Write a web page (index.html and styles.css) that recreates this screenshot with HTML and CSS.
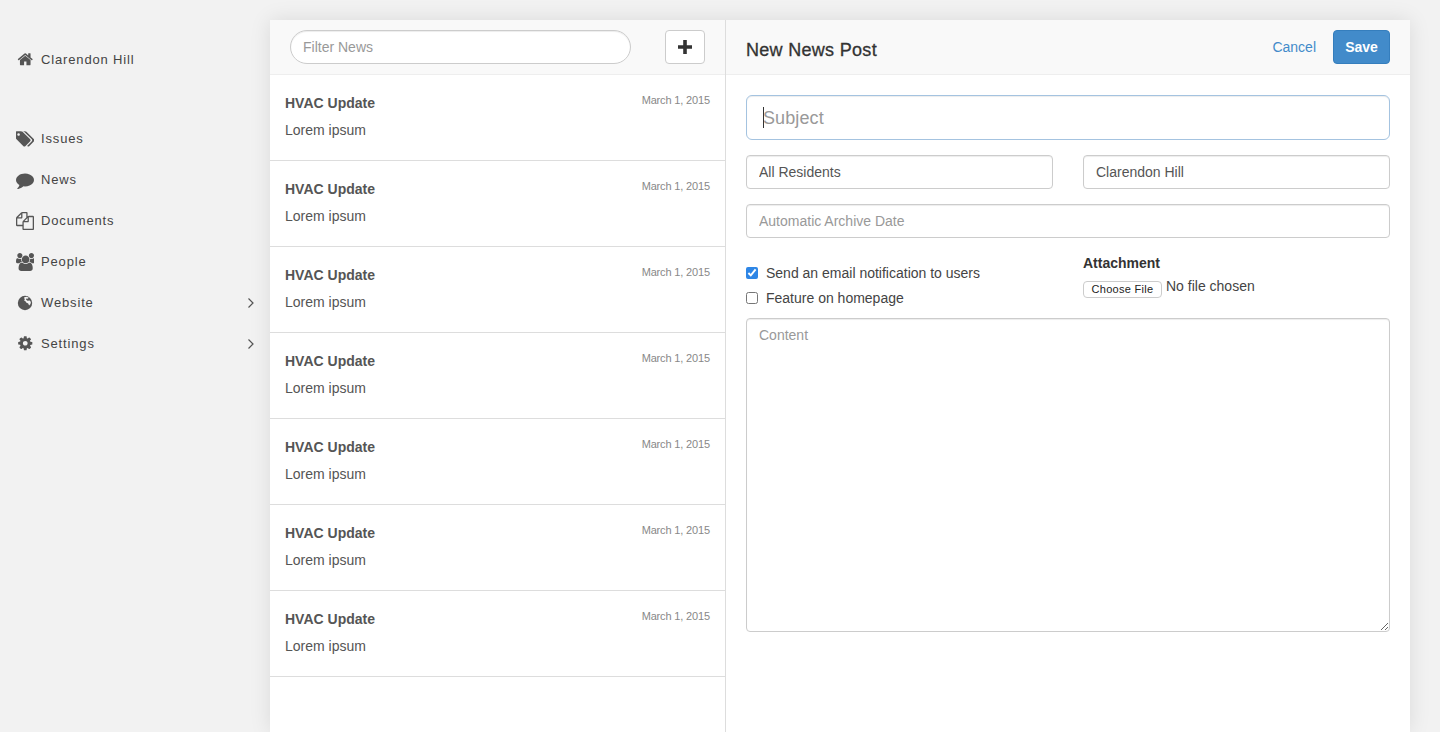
FILE: index.html
```html
<!DOCTYPE html>
<html lang="en">
<head>
<meta charset="UTF-8">
<meta name="viewport" content="width=device-width, initial-scale=1.0">
<title>New News Post</title>
<link rel="stylesheet" href="styles.css">
</head>
<body>

<div class="sidebar">
    <a class="nav-item site-link">
        <svg class="nav-icon nav-icon-small" viewBox="0 0 1792 1792"><path d="M1472 992v480q0 26-19 45t-45 19h-384v-384h-256v384h-384q-26 0-45-19t-19-45v-480q0-1 .5-3t.5-3l575-474 575 474q1 2 1 6zm223-69l-62 74q-8 9-21 11h-3q-13 0-21-7l-692-577-692 577q-12 8-24 7-13-2-21-11l-62-74q-8-10-7-23.5t11-21.5l719-599q32-26 76-26t76 26l244 204v-195q0-14 9-23t23-9h192q14 0 23 9t9 23v408l219 182q10 8 11 21.5t-7 23.5z"/></svg>
        <span>Clarendon Hill</span>
    </a>
    <a class="nav-item">
        <svg class="nav-icon" viewBox="0 0 1792 1792"><path d="M384 448q0-53-37.5-90.5t-90.5-37.5-90.5 37.5-37.5 90.5 37.5 90.5 90.5 37.5 90.5-37.5 37.5-90.5zm1067 576q0 53-37 90l-491 492q-39 37-91 37-53 0-90-37l-715-716q-38-37-64.5-101t-26.5-117v-416q0-52 38-90t90-38h416q53 0 117 26.5t102 64.5l715 714q37 39 37 91zm384 0q0 53-37 90l-491 492q-39 37-91 37-36 0-59-14t-53-45l470-470q37-37 37-90 0-52-37-91l-715-714q-38-38-102-64.5t-117-26.5h224q53 0 117 26.5t102 64.5l715 714q37 39 37 91z"/></svg>
        <span>Issues</span>
    </a>
    <a class="nav-item">
        <svg class="nav-icon" viewBox="0 0 1792 1792"><path d="M1792 896q0 174-120 321.5t-326 233-450 85.5q-70 0-145-8-198 175-460 242-49 14-114 22-17 2-30.5-9t-17.5-29v-1q-3-4-.5-12t2-10 4.5-9.5l6-9 7-8.5 8-9q7-8 31-34.5t34.5-38 31-39.5 32.5-51 27-59 26-76q-157-89-247.5-220t-90.5-281q0-130 71-248.5t191-204.5 286-136.5 348-50.5q244 0 450 85.5t326 233 120 321.5z"/></svg>
        <span>News</span>
    </a>
    <a class="nav-item">
        <svg class="nav-icon" viewBox="0 0 1792 1792"><path d="M1696 384q40 0 68 28t28 68v1216q0 40-28 68t-68 28h-960q-40 0-68-28t-28-68v-288h-544q-40 0-68-28t-28-68v-672q0-40 20-88t48-76l408-408q28-28 76-48t88-20h416q40 0 68 28t28 68v328q68-40 128-40h416zm-544 213l-299 299h299v-299zm-640-384l-299 299h299v-299zm196 647l316-316v-416h-384v416q0 40-28 68t-68 28h-416v640h512v-256q0-40 20-88t48-76zm956 804v-1152h-384v416q0 40-28 68t-68 28h-416v640h896z"/></svg>
        <span>Documents</span>
    </a>
    <a class="nav-item">
        <svg class="nav-icon" viewBox="0 0 1792 1792"><path d="M593 896q-162 5-265 128h-134q-82 0-138-40.5t-56-118.5q0-353 124-353 6 0 43.5 21t97.5 42.5 119 21.5q67 0 133-23-5 37-5 66 0 139 81 256zm1071 637q0 120-73 189.5t-194 69.5h-874q-121 0-194-69.5t-73-189.5q0-53 3.5-103.5t14-109 26.5-108.5 43-97.5 62-81 85.5-53.5 111.5-20q10 0 43 21.5t73 48 107 48 135 21.5 135-21.5 107-48 73-48 43-21.5q61 0 111.5 20t85.5 53.5 62 81 43 97.5 26.5 108.5 14 109 3.5 103.5zm-1024-1277q0 106-75 181t-181 75-181-75-75-181 75-181 181-75 181 75 75 181zm704 384q0 159-112.5 271.5t-271.5 112.5-271.5-112.5-112.5-271.5 112.5-271.5 271.5-112.5 271.5 112.5 112.5 271.5zm576 225q0 78-56 118.5t-138 40.5h-134q-103-123-265-128 81-117 81-256 0-29-5-66 66 23 133 23 59 0 119-21.5t97.5-42.5 43.5-21q124 0 124 353zm-128-609q0 106-75 181t-181 75-181-75-75-181 75-181 181-75 181 75 75 181z"/></svg>
        <span>People</span>
    </a>
    <a class="nav-item">
        <svg class="nav-icon" viewBox="0 0 18 18"><circle cx="9" cy="9" r="7.2"/><path class="globe-land" d="M8.2 3.2l2.6-.5 2 1-1.2 1.1-1.3-.2-.2 1.2 1.4.9 2.2-.2 1.2 1.4-.4 2-1.4 1.6-.9-1.9-2-1-.7-1.3-1.3-.6.5-1.2-.4-1.2z"/></svg>
        <span>Website</span>
        <svg class="nav-arrow" viewBox="0 0 8 12"><path d="M1.5 1.5L6 6l-4.5 4.5"/></svg>
    </a>
    <a class="nav-item">
        <svg class="nav-icon nav-icon-small" viewBox="0 0 1792 1792"><path d="M1152 896q0-106-75-181t-181-75-181 75-75 181 75 181 181 75 181-75 75-181zm512-109v222q0 12-8 23t-20 13l-185 28q-19 54-39 91 35 50 107 138 10 12 10 25t-9 23q-27 37-99 108t-94 71q-12 0-26-9l-138-108q-44 23-91 38-16 136-29 186-7 28-36 28h-222q-14 0-24.5-8.5t-11.5-21.5l-28-184q-49-16-90-37l-141 107q-10 9-25 9-14 0-25-11-126-114-165-168-7-10-7-23 0-12 8-23 15-21 51-66.5t54-70.5q-27-50-41-99l-183-27q-13-2-21-12.5t-8-23.5v-222q0-12 8-23t19-13l186-28q14-46 39-92-40-57-107-138-10-12-10-24 0-10 9-23 26-36 98.5-107.5t94.5-71.5q13 0 26 10l138 107q44-23 91-38 16-136 29-186 7-28 36-28h222q14 0 24.5 8.5t11.5 21.5l28 184q49 16 90 37l142-107q9-9 24-9 13 0 25 10 129 119 165 170 7 8 7 22 0 12-8 23-15 21-51 66.5t-54 70.5q26 50 41 98l183 28q13 2 21 12.5t8 23.5z"/></svg>
        <span>Settings</span>
        <svg class="nav-arrow" viewBox="0 0 8 12"><path d="M1.5 1.5L6 6l-4.5 4.5"/></svg>
    </a>
</div>

<div class="panel">
    <div class="news-list">
        <div class="panel-header list-header">
            <input type="text" class="form-control filter-input" placeholder="Filter News">
            <button class="add-button">
                <svg viewBox="0 0 14 14"><path d="M5.2 0h3.6v5.2H14v3.6H8.8V14H5.2V8.8H0V5.2h5.2z"/></svg>
            </button>
        </div>
        <div class="news-item">
            <div class="news-top"><b>HVAC Update</b><small>March 1, 2015</small></div>
            <p>Lorem ipsum</p>
        </div>
        <div class="news-item">
            <div class="news-top"><b>HVAC Update</b><small>March 1, 2015</small></div>
            <p>Lorem ipsum</p>
        </div>
        <div class="news-item">
            <div class="news-top"><b>HVAC Update</b><small>March 1, 2015</small></div>
            <p>Lorem ipsum</p>
        </div>
        <div class="news-item">
            <div class="news-top"><b>HVAC Update</b><small>March 1, 2015</small></div>
            <p>Lorem ipsum</p>
        </div>
        <div class="news-item">
            <div class="news-top"><b>HVAC Update</b><small>March 1, 2015</small></div>
            <p>Lorem ipsum</p>
        </div>
        <div class="news-item">
            <div class="news-top"><b>HVAC Update</b><small>March 1, 2015</small></div>
            <p>Lorem ipsum</p>
        </div>
        <div class="news-item">
            <div class="news-top"><b>HVAC Update</b><small>March 1, 2015</small></div>
            <p>Lorem ipsum</p>
        </div>
    </div>

    <div class="news-form">
        <div class="panel-header form-header">
            <h1>New News Post</h1>
            <a class="cancel-link">Cancel</a>
            <button class="save-button">Save</button>
        </div>
        <div class="form-body">
            <div class="subject-wrap">
                <input type="text" class="form-control subject-input" placeholder="Subject">
                <span class="text-caret"></span>
            </div>
            <div class="form-row">
                <input type="text" class="form-control" value="All Residents">
                <input type="text" class="form-control" value="Clarendon Hill">
            </div>
            <input type="text" class="form-control" placeholder="Automatic Archive Date">
            <div class="form-row options-row">
                <div class="checks">
                    <label><input type="checkbox" checked> Send an email notification to users</label>
                    <label><input type="checkbox"> Feature on homepage</label>
                </div>
                <div class="attachment">
                    <h4>Attachment</h4>
                    <input type="file">
                </div>
            </div>
            <textarea class="form-control content-input" placeholder="Content"></textarea>
        </div>
    </div>
</div>

</body>
</html>
```

FILE: styles.css
```css
* {
    box-sizing: border-box;
}

body {
    margin: 0;
    height: 732px;
    overflow: hidden;
    display: flex;
    background-color: #f2f2f2;
    color: #555;
    font-family: "Liberation Sans", Arial, sans-serif;
    font-size: 14px;
}

.sidebar {
    width: 270px;
    flex-shrink: 0;
    padding-top: 39px;
}

.nav-item {
    display: flex;
    align-items: center;
    height: 41px;
    padding: 0 15px 0 16px;
    color: #444;
    font-size: 13px;
    letter-spacing: 0.85px;
}

.site-link {
    margin-bottom: 38px;
}

.nav-icon {
    width: 18px;
    height: 18px;
    margin-right: 7px;
    fill: #555;
}

.nav-icon-small {
    width: 16.5px;
    height: 16.5px;
    margin-left: 0.75px;
    margin-right: 7.75px;
}

.globe-land {
    fill: #f2f2f2;
}

.nav-arrow {
    width: 8px;
    height: 12px;
    margin-left: auto;
    fill: none;
    stroke: #555;
    stroke-width: 1.2;
}

.panel {
    width: 1140px;
    height: 712px;
    margin-top: 20px;
    display: flex;
    background-color: #fff;
    box-shadow: 0 0 20px rgba(0, 0, 0, 0.1);
}

.panel-header {
    height: 55px;
    display: flex;
    align-items: center;
    background-color: #f9f9f9;
    border-bottom: 1px solid #eee;
}

.form-control {
    width: 100%;
    height: 34px;
    padding: 6px 12px;
    border: 1px solid #ccc;
    border-radius: 4px;
    box-shadow: inset 0 1px 1px rgba(0, 0, 0, 0.075);
    color: #555;
    background-color: #fff;
    font-family: inherit;
    font-size: 14px;
    outline: none;
}

.form-control::placeholder {
    color: #999;
    opacity: 1;
}

/* left column */
.news-list {
    width: 456px;
    flex-shrink: 0;
    border-right: 1px solid #ddd;
}

.list-header {
    padding: 0 20px;
    justify-content: space-between;
}

.filter-input {
    width: 341px;
    border-radius: 17px;
}

.add-button {
    width: 40px;
    height: 34px;
    padding: 0;
    display: flex;
    align-items: center;
    justify-content: center;
    background-color: #fff;
    border: 1px solid #ccc;
    border-radius: 4px;
}

.add-button svg {
    width: 14px;
    height: 14px;
    fill: #333;
}

.news-item {
    height: 86px;
    padding: 20px 15px 0;
    border-bottom: 1px solid #ddd;
}

.news-top {
    display: flex;
    justify-content: space-between;
    align-items: flex-start;
    line-height: 16px;
}

.news-top small {
    font-size: 11px;
    line-height: 11px;
    letter-spacing: -0.15px;
    color: #888;
}

.news-item p {
    margin: 11px 0 0;
    line-height: 16px;
}

/* right column */
.news-form {
    flex: 1;
}

.form-header {
    padding: 0 20px;
}

.form-header h1 {
    margin: 7px auto 0 0;
    font-size: 18px;
    font-weight: 500;
    letter-spacing: 0.3px;
    -webkit-text-stroke: 0.3px #333;
    color: #333;
}

.cancel-link {
    margin-right: 17px;
    color: #428bca;
}

.save-button {
    width: 57px;
    height: 34px;
    padding: 0;
    background-color: #428bca;
    border: 1px solid #357ebd;
    border-radius: 4px;
    color: #fff;
    font-family: inherit;
    font-size: 14px;
    font-weight: bold;
}

.form-body {
    padding: 20px;
    display: flex;
    flex-direction: column;
    gap: 15px;
}

.subject-wrap {
    position: relative;
}

.subject-input {
    height: 45px;
    padding: 11px 16px 9px;
    border-color: #a4c3e0;
    border-radius: 6px;
    font-size: 18px;
    letter-spacing: 0.1px;
}

.text-caret {
    position: absolute;
    left: 17px;
    top: 12px;
    width: 1px;
    height: 21px;
    background-color: #333;
}

.form-row {
    display: grid;
    grid-template-columns: 1fr 1fr;
    gap: 30px;
}

.options-row {
    height: 50px;
}

.checks {
    padding-top: 7px;
}

.checks label {
    display: flex;
    align-items: center;
    height: 25px;
    color: #444;
}

.checks input {
    width: 12px;
    height: 12px;
    margin: 0 8px 0 0;
    accent-color: #2e86e6;
}

.attachment h4 {
    margin: 0 0 7px;
    padding-top: 2px;
    font-size: 14px;
    line-height: 16px;
    color: #333;
}

.attachment input {
    display: block;
    font-family: inherit;
    font-size: 14px;
    color: #444;
}

.attachment input::file-selector-button {
    width: 79px;
    height: 17px;
    margin-right: 4px;
    padding: 0;
    vertical-align: -2px;
    background-color: #fff;
    border: 1px solid #ccc;
    border-radius: 4px;
    color: #222;
    font-family: inherit;
    font-size: 11px;
    letter-spacing: 0.3px;
}

.content-input {
    height: 314px;
    padding-top: 8px;
    resize: vertical;
}
```
